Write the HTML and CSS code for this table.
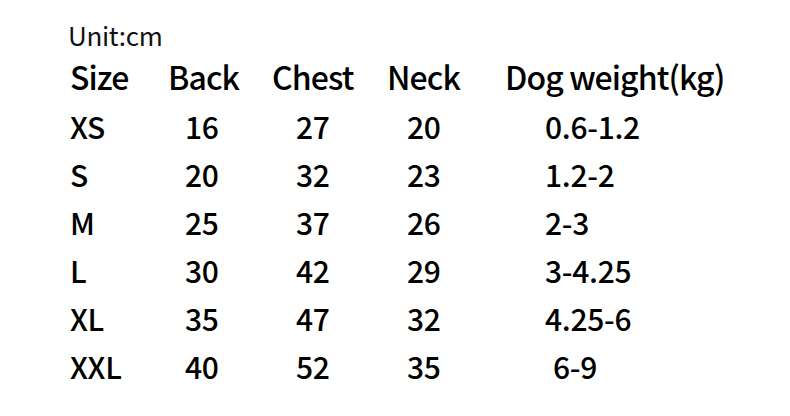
FILE: index.html
```html
<!DOCTYPE html>
<html>
<head>
<meta charset="utf-8">
<link rel="stylesheet" href="styles.css">
</head>
<body>
<div class="page">
  <div class="unit">Unit:cm</div>
  <div class="table">
    <div class="row head">
      <div class="c size">Size</div>
      <div class="c back">Back</div>
      <div class="c chest">Chest</div>
      <div class="c neck">Neck</div>
      <div class="c weight">Dog weight(kg)</div>
    </div>
    <div class="row">
      <div class="c size">XS</div>
      <div class="c back v">16</div>
      <div class="c chest v">27</div>
      <div class="c neck v">20</div>
      <div class="c weight v">0.6-1.2</div>
    </div>
    <div class="row">
      <div class="c size">S</div>
      <div class="c back v">20</div>
      <div class="c chest v">32</div>
      <div class="c neck v">23</div>
      <div class="c weight v">1.2-2</div>
    </div>
    <div class="row">
      <div class="c size">M</div>
      <div class="c back v">25</div>
      <div class="c chest v">37</div>
      <div class="c neck v">26</div>
      <div class="c weight v">2-3</div>
    </div>
    <div class="row">
      <div class="c size">L</div>
      <div class="c back v">30</div>
      <div class="c chest v">42</div>
      <div class="c neck v">29</div>
      <div class="c weight v">3-4.25</div>
    </div>
    <div class="row">
      <div class="c size">XL</div>
      <div class="c back v">35</div>
      <div class="c chest v">47</div>
      <div class="c neck v">32</div>
      <div class="c weight v">4.25-6</div>
    </div>
    <div class="row">
      <div class="c size">XXL</div>
      <div class="c back v">40</div>
      <div class="c chest v">52</div>
      <div class="c neck v">35</div>
      <div class="c weight v w69">6-9</div>
    </div>
  </div>
</div>
</body>
</html>
```
FILE: styles.css
```css
html, body {
  margin: 0;
  padding: 0;
  background: #ffffff;
}
body {
  font-family: "Noto Sans CJK SC", "Noto Sans", sans-serif;
  color: #000000;
  width: 790px;
  height: 416px;
  overflow: hidden;
}
.page {
  padding: 20px 0 0 68px;
}
.unit {
  font-size: 26px;
  line-height: 30px;
  font-weight: 400;
  letter-spacing: -0.3px;
  color: #111;
}
.table {
  margin-top: 3px;
  padding-left: 2px;
}
.row {
  display: grid;
  grid-template-columns: 98px 104px 115px 118px 1fr;
  font-size: 30px;
  line-height: 48px;
  font-weight: 500;
  letter-spacing: -0.3px;
}
.row.head {
  font-size: 32px;
  line-height: 47px;
  letter-spacing: -0.9px;
  margin-bottom: 2px;
}
.c {
  white-space: nowrap;
}
.back.v { padding-left: 17px; }
.chest.v { padding-left: 24px; }
.neck.v { padding-left: 20px; }
.weight.v { padding-left: 40px; }
.weight.w69 { padding-left: 48px; }
```
